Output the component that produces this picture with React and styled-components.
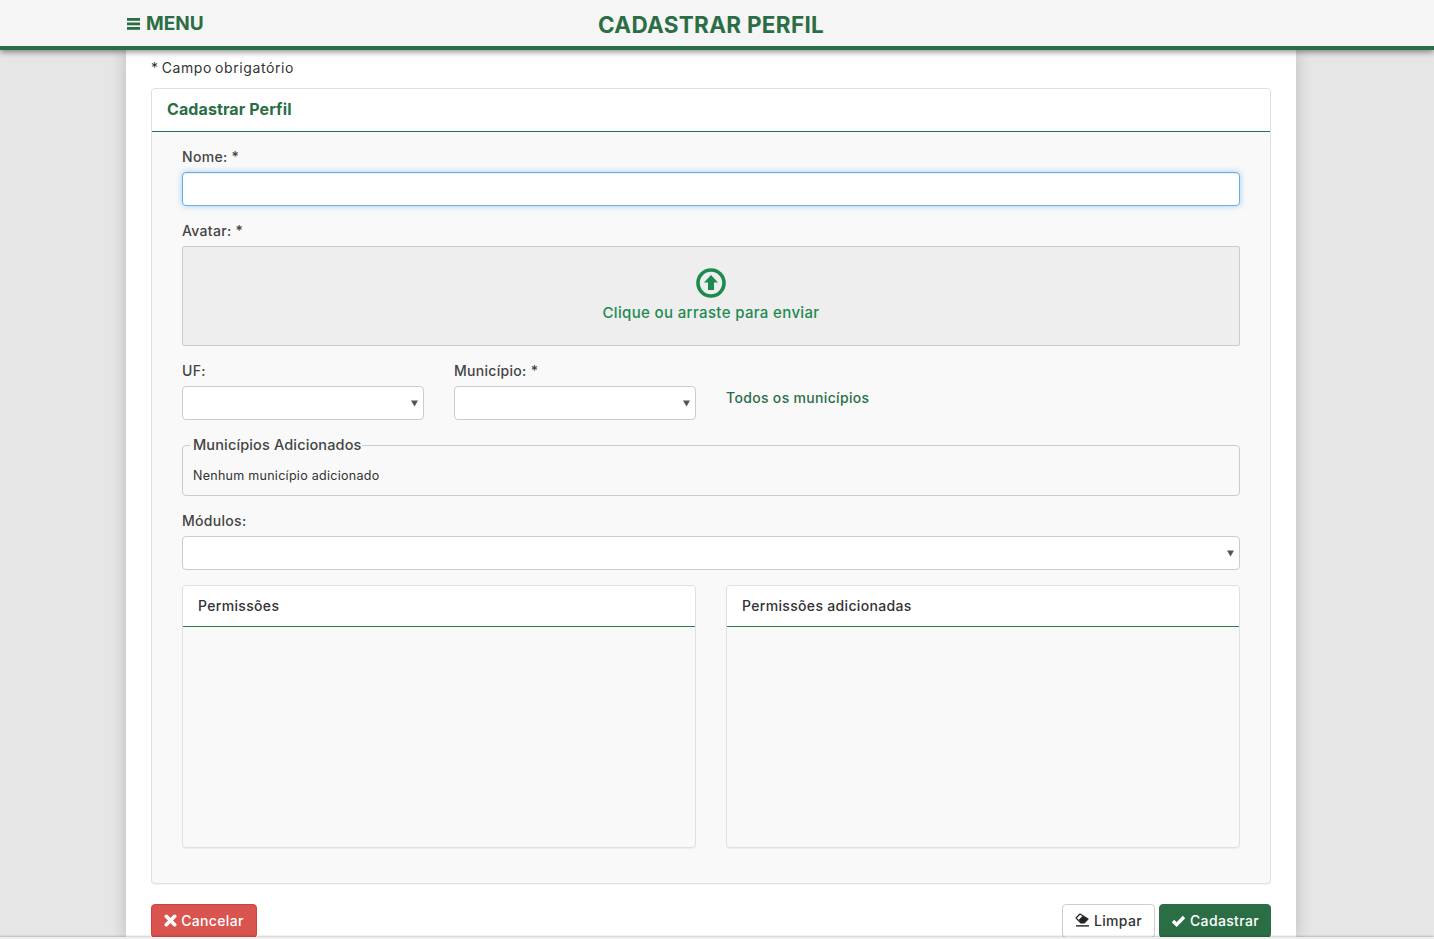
import React from "react";
import styled, { createGlobalStyle } from "styled-components";

const GREEN = "#2b6e46";
const Global = createGlobalStyle`
  * { box-sizing: border-box; }
  html, body { margin: 0; height: 100%; overflow: hidden; }
  body { background: #e6e6e6; font-family: Inter, "Open Sans", sans-serif; font-size: 14px; color: #333; }
`;
const Page = styled.div`height: 939px; overflow: hidden; display: flex; flex-direction: column; position: relative;`;
const TopBar = styled.header`
  height: 50px; flex: none; background: #f5f5f5; border-bottom: 4px solid ${GREEN};
  box-shadow: 0 2px 6px rgba(0,0,0,.45); position: relative; z-index: 2;
`;
const TopInner = styled.div`
  width: 1170px; height: 46px; margin-left: 126px; display: grid; grid-template-columns: 1fr auto 1fr; align-items: center;
`;
const MenuLink = styled.a`
  color: ${GREEN}; font-weight: 700; font-size: 19px; display: flex; align-items: center; gap: 6px; padding-left: 1px; margin-top: -3px;
`;
const PageTitle = styled.h1`
  margin: 0; color: ${GREEN}; font-size: 22.5px; font-weight: 700; line-height: 50px; letter-spacing: .3px;
`;
const Sheet = styled.main`
  width: 1170px; margin-left: 126px; flex: 1; background: #fff; padding: 9px 25px 0;
  box-shadow: 0 0 16px rgba(0,0,0,.2);
`;
const Required = styled.p`margin: 0 0 12px; font-size: 14px; line-height: 17px; letter-spacing: .6px; word-spacing: -1.5px; color: #333;`;
const Panel = styled.section`border: 1px solid #e0e0e0; border-radius: 4px; background: #f9f9f9; height: 796px; box-shadow: 0 1px 1px rgba(0,0,0,.05);`;
const PanelHead = styled.div`
  height: 43px; background: #fff; border-bottom: 1px solid ${GREEN}; border-radius: 4px 4px 0 0; padding: 0 15px 2px;
  display: flex; align-items: center; color: ${GREEN}; font-size: 16px; font-weight: 700; letter-spacing: .1px;
`;
const PanelBody = styled.div`padding: 16px 30px 0;`;
const Label = styled.label`display: block; font-size: 14px; line-height: 17px; color: #444; font-weight: 500; letter-spacing: .3px; margin-bottom: 7px;`;
const TextInput = styled.input`
  display: block; width: 100%; height: 34px; border: 1px solid #66afe9; border-radius: 4px; background: #fff; outline: none;
  box-shadow: inset 0 1px 1px rgba(0,0,0,.075), 0 0 6px rgba(102,175,233,.6); margin-bottom: 16px;
`;
const Drop = styled.div`
  height: 100px; background: #eee; border: 1px solid #ccc; border-radius: 2px; display: flex; flex-direction: column; align-items: center;
  padding-top: 21px; gap: 6px; color: #1d8a50; font-size: 15px; font-weight: 500; line-height: 18px; letter-spacing: .35px; margin-bottom: 16px;
`;
const SelectRow = styled.div`display: grid; grid-template-columns: 242px 242px auto; column-gap: 30px; margin-bottom: 16px;`;
const caret = "data:image/svg+xml,%3Csvg xmlns='http://www.w3.org/2000/svg' width='7' height='7'%3E%3Cpath d='M0 .5h7L3.5 6.5z' fill='%23555'/%3E%3C/svg%3E";
const Select = styled.select`
  display: block; width: 100%; height: 34px; border: 1px solid #ccc; border-radius: 4px; color: #555; font-size: 14px;
  outline: none; appearance: none; background: #fff url("${caret}") no-repeat right 5px center;
`;
const AllLink = styled.a`color: ${GREEN}; font-size: 14px; font-weight: 500; letter-spacing: .33px; padding-top: 27px; line-height: 17px;`;
const Fieldset = styled.fieldset`
  margin: 0 0 16px; padding: 0 10px 11px 7px; height: 60px; border: 1px solid #ccc; border-radius: 4px; min-width: 0;
`;
const Legend = styled.legend`padding: 0 0 0 3px; font-size: 14.5px; line-height: 18px; color: #444; font-weight: 500; letter-spacing: .14px;`;
const Empty = styled.p`margin: 14px 0 0 3px; font-size: 12.5px; line-height: 15px; color: #333; letter-spacing: .28px;`;
const Lists = styled.div`display: grid; grid-template-columns: 1fr 1fr; gap: 30px; margin-top: 15px;`;
const ListBox = styled.div`height: 263px; border: 1px solid #e0e0e0; border-radius: 4px; box-shadow: 0 1px 1px rgba(0,0,0,.05);`;
const ListHead = styled.div`
  height: 41px; padding: 0 15px 1px; background: #fff; border-bottom: 1px solid #2b7a48; border-radius: 4px 4px 0 0;
  display: flex; align-items: center; font-size: 14px; font-weight: 500; color: #333; letter-spacing: .33px;
`;
const Actions = styled.div`display: flex; gap: 4px; margin-top: 20px;`;
const Button = styled.button`
  height: 34px; width: ${p => p.$w}px; border-radius: 4px; padding: 0 0 2px; font: 500 14px Inter, sans-serif; letter-spacing: .35px;
  display: inline-flex; align-items: center; justify-content: center; gap: 4px;
  border: 1px solid ${p => p.$border}; background: ${p => p.$bg}; color: ${p => p.$fg};
  margin-left: ${p => (p.$push ? "auto" : "0")};
`;
const Footer = styled.div`position: absolute; left: 0; right: 0; bottom: 0; height: 2px; background: #eee; box-shadow: 0 -1px 2px rgba(0,0,0,.2); z-index: 3;`;

const UploadIcon = () => (
  <svg width="30" height="30" viewBox="0 0 30 30" aria-hidden="true">
    <circle cx="15" cy="15" r="13" fill="none" stroke="#1d8a50" strokeWidth="3.6" />
    <path d="M15 7l7 7.5h-4V22h-6v-7.5H8z" fill="#1d8a50" />
  </svg>
);
const BarsIcon = () => (
  <svg width="13" height="12" viewBox="0 0 13 12" fill={GREEN} aria-hidden="true">
    <rect y="0" width="13" height="2.8" /><rect y="4.5" width="13" height="2.8" /><rect y="9" width="13" height="2.8" />
  </svg>
);
const CrossIcon = () => (
  <svg width="13" height="13" viewBox="0 0 13 13" aria-hidden="true">
    <path d="M2.3 2.3l8.4 8.4M10.7 2.3l-8.4 8.4" stroke="#fff" strokeWidth="3.6" strokeLinecap="round" fill="none" />
  </svg>
);
const CheckIcon = () => (
  <svg width="15" height="13" viewBox="0 0 15 13" aria-hidden="true">
    <path d="M2 7l3.6 3.6L13 3" stroke="#fff" strokeWidth="3.4" fill="none" />
  </svg>
);
const EraserIcon = () => (
  <svg width="15" height="14" viewBox="0 0 15 14" aria-hidden="true">
    <path d="M5 1L1 5l5 5h3l4-4z" fill="#fff" stroke="#222" strokeWidth="1.2" strokeLinejoin="round" />
    <path d="M3.8 6.7L7.6 3l5.4 3-4 4H6z" fill="#222" />
    <rect x="1" y="12.2" width="13" height="1.4" fill="#222" />
  </svg>
);

export default function App() {
  return (
    <Page>
      <Global />
      <TopBar>
        <TopInner>
          <MenuLink><BarsIcon />MENU</MenuLink>
          <PageTitle>CADASTRAR PERFIL</PageTitle>
        </TopInner>
      </TopBar>
      <Sheet>
        <Required>* Campo obrigatório</Required>
        <Panel>
          <PanelHead>Cadastrar Perfil</PanelHead>
          <PanelBody>
            <Label>Nome: *</Label>
            <TextInput type="text" />
            <Label>Avatar: *</Label>
            <Drop><UploadIcon />Clique ou arraste para enviar</Drop>
            <SelectRow>
              <div><Label>UF:</Label><Select /></div>
              <div><Label>Município: *</Label><Select /></div>
              <AllLink>Todos os municípios</AllLink>
            </SelectRow>
            <Fieldset>
              <Legend>Municípios Adicionados</Legend>
              <Empty>Nenhum município adicionado</Empty>
            </Fieldset>
            <Label>Módulos:</Label>
            <Select />
            <Lists>
              <ListBox><ListHead>Permissões</ListHead></ListBox>
              <ListBox><ListHead>Permissões adicionadas</ListHead></ListBox>
            </Lists>
          </PanelBody>
        </Panel>
        <Actions>
          <Button $w={106} $bg="#d9534f" $border="#d43f3a" $fg="#fff"><CrossIcon />Cancelar</Button>
          <Button $w={93} $push $bg="#fff" $border="#ccc" $fg="#333"><EraserIcon />Limpar</Button>
          <Button $w={112} $bg={GREEN} $border={GREEN} $fg="#fff"><CheckIcon />Cadastrar</Button>
        </Actions>
      </Sheet>
      <Footer />
    </Page>
  );
}
